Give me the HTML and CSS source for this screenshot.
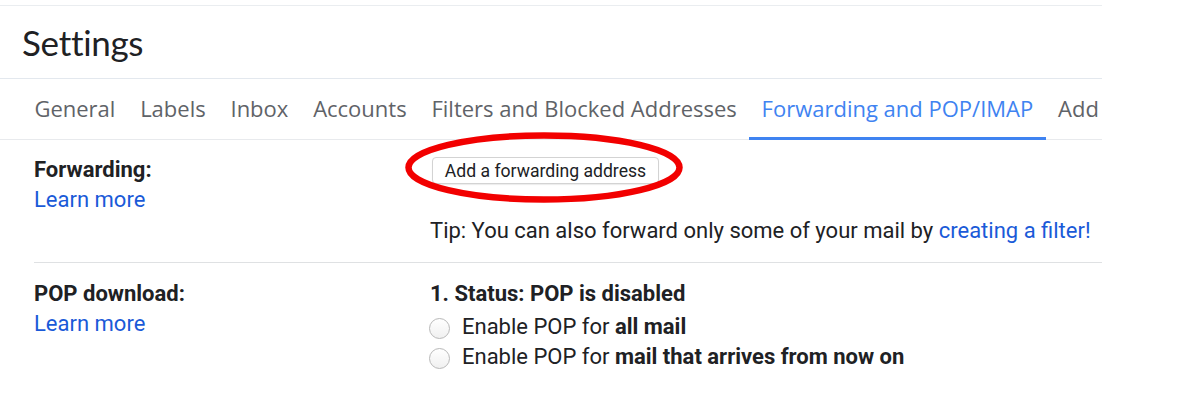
FILE: index.html
```html
<!DOCTYPE html>
<html lang="en">
<head>
<meta charset="utf-8">
<title>Settings</title>
<link rel="stylesheet" href="styles.css">
</head>
<body>
<div class="page">
  <header class="header">
    <h1 class="title">Settings</h1>
  </header>
  <nav class="tabs">
    <span class="tab">General</span>
    <span class="tab">Labels</span>
    <span class="tab">Inbox</span>
    <span class="tab">Accounts</span>
    <span class="tab">Filters and Blocked Addresses</span>
    <span class="tab active">Forwarding and POP/IMAP</span>
    <span class="tab last">Add</span>
  </nav>
  <section class="row row-forward">
    <div class="label">
      <div class="label-title">Forwarding:</div>
      <a class="link" href="#">Learn more</a>
    </div>
    <div class="content">
      <div class="btn-wrap">
        <button class="btn" type="button">Add a forwarding address</button>
        <svg class="circle-mark" width="280" height="73" viewBox="0 0 280 73" aria-hidden="true">
          <ellipse cx="140" cy="36.5" rx="135.5" ry="32" fill="none" stroke="#f20000" stroke-width="6.5"/>
        </svg>
      </div>
      <p class="tip">Tip: You can also forward only some of your mail by <a class="link" href="#">creating a filter!</a></p>
    </div>
  </section>
  <section class="row row-pop">
    <div class="label">
      <div class="label-title">POP download:</div>
      <a class="link" href="#">Learn more</a>
    </div>
    <div class="content">
      <div class="status">1. Status: POP is disabled</div>
      <label class="option"><span class="radio"></span><span>Enable POP for <b>all mail</b></span></label>
      <label class="option"><span class="radio"></span><span>Enable POP for <b>mail that arrives from now on</b></span></label>
    </div>
  </section>
</div>
</body>
</html>
```

FILE: styles.css
```css
html, body {
  margin: 0;
  padding: 0;
  background: #ffffff;
}

.page {
  width: 1102px;
  overflow: hidden;
  padding-top: 5px;
  font-family: Roboto, "Liberation Sans", Arial, sans-serif;
  color: #202124;
}

.header {
  border-top: 1px solid #eaedf0;
  border-bottom: 1px solid #e3e8ee;
  height: 72px;
  display: flex;
  align-items: center;
  padding-left: 22px;
}

.title {
  margin: 0;
  font-family: Lato, "Open Sans", sans-serif;
  font-weight: 400;
  font-size: 35px;
  letter-spacing: -0.3px;
  line-height: 40px;
  color: #202124;
}

.tabs {
  display: flex;
  padding-left: 22px;
  height: 60px;
  border-bottom: 1px solid #e8eaed;
  white-space: nowrap;
}

.tab {
  box-sizing: border-box;
  height: 61px;
  margin-bottom: -1px;
  padding: 0 12.4px;
  display: flex;
  align-items: center;
  font-family: "Open Sans", sans-serif;
  font-size: 22px;
  color: #5f6368;
  border-bottom: 3px solid transparent;
  flex: none;
}

.tab.active {
  color: #3f83f1;
  border-bottom-color: #3f83f1;
}

.tab.last {
  padding-right: 0;
}

.row {
  display: flex;
  margin-left: 34px;
  font-size: 22px;
  line-height: 30px;
}

.row-forward {
  padding-top: 15px;
  padding-bottom: 16px;
  border-bottom: 1px solid #dfe1e3;
}

.row-pop {
  padding-top: 16px;
}

.label {
  width: 396px;
  flex: none;
  display: flex;
  flex-direction: column;
}

.label-title {
  font-weight: 700;
  color: #202124;
}

.link {
  color: #1a5ad8;
  text-decoration: none;
}

.content {
  display: flex;
  flex-direction: column;
  align-items: flex-start;
}

.btn-wrap {
  position: relative;
  margin-top: 2px;
  margin-left: 2px;
}

.btn {
  display: block;
  box-sizing: border-box;
  height: 27px;
  width: 227px;
  padding: 0;
  border: 1px solid #d3d3d3;
  border-radius: 4px;
  background: #ffffff;
  font-family: Roboto, "Liberation Sans", Arial, sans-serif;
  font-size: 17.6px;
  color: #202124;
  box-shadow: 0 1px 1px rgba(0, 0, 0, 0.08);
}

.circle-mark {
  position: absolute;
  left: -28px;
  top: -26px;
  pointer-events: none;
}

.tip {
  margin: 32px 0 0 0;
  color: #202124;
}

.status {
  font-weight: 700;
  margin-bottom: 3px;
}

.option {
  display: flex;
  align-items: center;
  gap: 12px;
  height: 30px;
}

.radio {
  box-sizing: border-box;
  width: 21px;
  height: 21px;
  border-radius: 50%;
  border: 1px solid #b8b8b8;
  background: linear-gradient(#ffffff, #f0f0f0);
  flex: none;
  margin-top: 3px;
  margin-left: -1px;
}

.option b {
  font-weight: 700;
}
```
